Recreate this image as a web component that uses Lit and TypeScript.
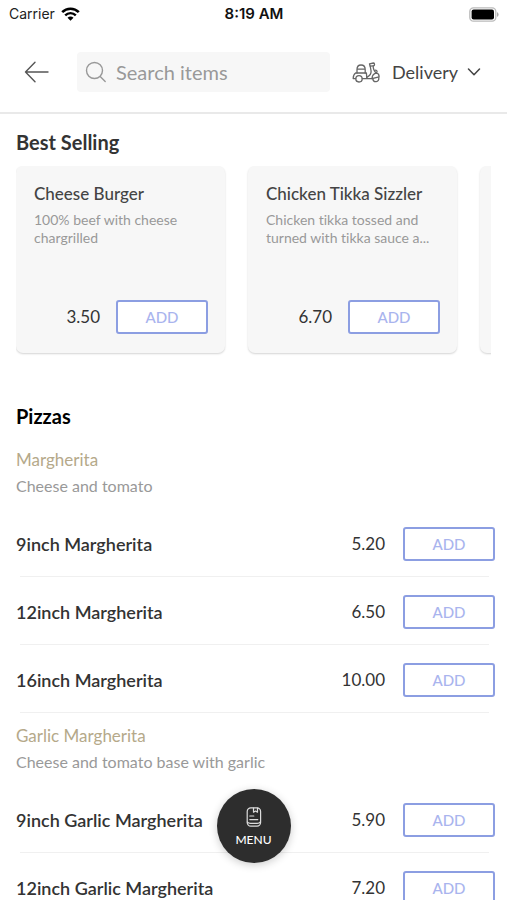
import { LitElement, html, css, svg } from "lit";
import { customElement, property } from "lit/decorators.js";

interface Item {
  name: string;
  price: string;
}

interface Group {
  title: string;
  description: string;
  items: Item[];
}

interface Featured extends Item {
  description: string;
}

const FEATURED: Featured[] = [
  { name: "Cheese Burger", description: "100% beef with cheese chargrilled", price: "3.50" },
  { name: "Chicken Tikka Sizzler", description: "Chicken tikka tossed and turned with tikka sauce a...", price: "6.70" },
  { name: "", description: "", price: "" },
];

const GROUPS: Group[] = [
  {
    title: "Margherita",
    description: "Cheese and tomato",
    items: [
      { name: "9inch Margherita", price: "5.20" },
      { name: "12inch Margherita", price: "6.50" },
      { name: "16inch Margherita", price: "10.00" },
    ],
  },
  {
    title: "Garlic Margherita",
    description: "Cheese and tomato base with garlic",
    items: [
      { name: "9inch Garlic Margherita", price: "5.90" },
      { name: "12inch Garlic Margherita", price: "7.20" },
    ],
  },
];

@customElement("add-button")
class AddButton extends LitElement {
  @property() item = "";

  static styles = css`
    :host {
      display: block;
      flex: none;
    }
    .add {
      display: block;
      width: 92px;
      height: 34px;
      padding: 0;
      border: 2px solid #8c9ee2;
      border-radius: 3px;
      background: #fff;
      color: #a9b4ee;
      font: 500 15px/30px Lato, sans-serif;
      cursor: pointer;
    }
  `;

  render() {
    return html`<button class="add" type="button" aria-label=${"ADD " + this.item}>ADD</button>`;
  }
}

@customElement("status-bar")
class StatusBar extends LitElement {
  static styles = css`
    :host {
      display: grid;
      grid-template-columns: 1fr auto 1fr;
      align-items: center;
      height: 28px;
      padding: 0 8px 0 9px;
      font: 400 14px/20px Inter, sans-serif;
      color: #222;
    }
    .carrier {
      display: flex;
      align-items: center;
      gap: 6px;
    }
    .time {
      font-weight: 600;
      font-size: 15px;
      color: #111;
    }
    .battery {
      justify-self: end;
    }
    svg {
      display: block;
    }
  `;

  render() {
    return html`
      <div class="carrier">
        <span>Carrier</span>
        <svg width="19" height="14" viewBox="0 0 19 14" fill="none" stroke="#000">
          <path d="M1.2 5.2C5.8.6 13.2.6 17.8 5.2" stroke-width="2.6" />
          <path d="M4.2 8.3c3-2.9 7.6-2.9 10.6 0" stroke-width="2.4" />
          <path d="M9.5 13.8 6.5 10.700c1.7-1.5 4.3-1.5 6 0Z" fill="#000" stroke="none" />
        </svg>
      </div>
      <span class="time">8:19 AM</span>
      <svg class="battery" width="30" height="15" viewBox="0 0 30 15">
        <rect x=".8" y=".8" width="26" height="13.4" rx="3.6" fill="#fff" stroke="#bbb" stroke-width="1.3" />
        <rect x="2.6" y="2.6" width="22.4" height="9.8" rx="2" fill="#000" />
        <path d="M28.2 5.2c1.7.6 1.7 4 0 4.6Z" fill="#999" />
      </svg>
    `;
  }
}

@customElement("app-root")
class AppRoot extends LitElement {
  static styles = css`
    :host {
      position: relative;
      display: flex;
      flex-direction: column;
      height: 100vh;
      overflow: hidden;
      background: #fff;
      color: #333;
      font-family: Lato, sans-serif;
      font-variant-ligatures: none;
    }
    * {
      box-sizing: border-box;
    }
    svg {
      display: block;
      flex: none;
    }
    h2,
    h3,
    p,
    ul {
      margin: 0;
      padding: 0;
      list-style: none;
    }
    .bar {
      display: flex;
      align-items: center;
      padding: 24px 26px 20px 24px;
      border-bottom: 2px solid #e9e9e9;
    }
    .back {
      padding: 0;
      border: 0;
      background: none;
      cursor: pointer;
    }
    .search {
      flex: 1;
      min-width: 0;
      display: flex;
      align-items: center;
      gap: 9px;
      height: 40px;
      margin: 0 22px 0 28px;
      padding: 0 8px;
      border-radius: 4px;
      background: #f7f7f7;
    }
    .field {
      flex: 1;
      min-width: 0;
      padding: 0;
      border: 0;
      outline: 0;
      background: none;
      color: #333;
      font: 400 20px/24px Lato, sans-serif;
    }
    .field::placeholder {
      color: #999;
      opacity: 1;
    }
    .mode {
      display: grid;
      grid-template-columns: auto auto;
      align-items: center;
      column-gap: 12px;
    }
    .pick {
      grid-area: 1 / 2;
      appearance: none;
      padding: 0 22px 0 0;
      border: 0;
      background: none;
      color: #444;
      font: 400 18px/24px Lato, sans-serif;
    }
    .chevron {
      grid-area: 1 / 2;
      justify-self: end;
      pointer-events: none;
    }
    .content {
      flex: 1;
      min-height: 0;
      overflow-y: auto;
      scrollbar-width: none;
      padding-top: 16px;
    }
    .heading {
      padding: 0 16px;
      font-size: 20px;
      line-height: 24px;
      font-weight: 700;
    }
    .cards {
      display: flex;
      gap: 23px;
      margin: 12px 16px 0;
      padding-bottom: 3px;
      overflow-x: auto;
      scrollbar-width: none;
    }
    .card {
      flex: none;
      display: flex;
      flex-direction: column;
      width: 209px;
      height: 187px;
      padding: 16px 17px 19px 18px;
      border-radius: 7px;
      background: #f7f7f7;
      box-shadow: 0 1px 2px #d4d4d4;
    }
    .name {
      font-size: 17px;
      line-height: 24px;
      font-weight: 500;
      color: #444;
      white-space: nowrap;
    }
    .about {
      margin-top: 5px;
      color: #999;
      font-size: 14px;
      line-height: 18px;
    }
    .buy {
      display: flex;
      justify-content: flex-end;
      align-items: center;
      gap: 16px;
      margin-top: auto;
    }
    .price {
      font-size: 17px;
      line-height: 24px;
    }
    .pizzas {
      margin-top: 48px;
      margin-bottom: 9px;
      color: #000;
    }
    .grouphead {
      padding: 12px 16px 13px;
    }
    .grouptitle {
      color: #b5a98a;
      font-size: 17px;
      line-height: 22px;
      font-weight: 400;
    }
    .groupabout {
      margin-top: 5px;
      color: #999;
      font-size: 16px;
      line-height: 20px;
    }
    .row {
      display: flex;
      align-items: center;
      gap: 18px;
      height: 67px;
      padding: 2px 12px 0 16px;
    }
    .rowname {
      flex: 1;
      font-size: 18px;
      line-height: 24px;
      font-weight: 600;
    }
    .line {
      height: 1px;
      margin: 0 18px 0 20px;
      background: #f0f0f0;
    }
    .menu {
      position: absolute;
      bottom: 37px;
      left: 50%;
      translate: -50% 0;
      display: flex;
      flex-direction: column;
      align-items: center;
      gap: 5px;
      width: 74px;
      height: 74px;
      padding: 18px 0 0;
      border: 0;
      border-radius: 50%;
      background: #2d2d2d;
      box-shadow: 0 2px 8px #0003;
      color: #fff;
      font: 500 12px/16px Lato, sans-serif;
      cursor: pointer;
    }
  `;

  private scooter() {
    return svg`
      <svg width="28" height="21" viewBox="0 0 28 21" fill="none" stroke="#666" stroke-width="1.3" stroke-linejoin="round" stroke-linecap="round">
        <path d="M5 11V7.500C5 4.800 6.500 3 9 3s4.200 1.800 4.200 4.500V11M5 7.200h8.200" />
        <path d="M3.600 11h10.800l.4 4.600M3.600 11C2 12 1.200 14 1.200 16.600h2.600M10.200 16.600h10" />
        <circle cx="7" cy="16.800" r="3.200" />
        <path d="M17.500 1.800 21.400 1c1.500.2 1.500 2.600 0 2.800l-3.300.4Z" />
        <path d="m18.200 4.200.9 4.800c.2 2.600-1.300 4.800-4.300 6.400M21.200 4c-.2 3 1.200 5.400 3.300 7.400" />
        <path d="M20 16.400c.2-2.900 1.800-4.800 4.500-5.200 1.700.2 2.600 1.500 2.600 3.600L20 16.600" />
        <path d="M20.800 16.800c.6 4.200 6.400 3.800 6-1.200M24 11c1.700-.8 1.400-2.600-.6-2.800" />
      </svg>`;
  }

  render() {
    return html`
      <status-bar></status-bar>
      <header class="bar">
        <button class="back" type="button" aria-label="Back">
          <svg width="25" height="22" viewBox="0 0 25 22" fill="none" stroke="#555" stroke-width="1.4" stroke-linecap="round" stroke-linejoin="round">
            <path d="M24 11H1.500M11 1.300 1.500 11 11 20.700" />
          </svg>
        </button>
        <label class="search">
          <svg width="22" height="22" viewBox="0 0 22 22" fill="none" stroke="#999" stroke-width="1.4" stroke-linecap="round">
            <circle cx="9.500" cy="9.500" r="8" />
            <path d="m15.200 15.400 5 5" />
          </svg>
          <input class="field" type="text" aria-label="Search items" placeholder="Search items" />
        </label>
        <label class="mode">
          ${this.scooter()}
          <select class="pick" aria-label="Order type">
            <option>Delivery</option>
          </select>
          <svg class="chevron" width="14" height="8" viewBox="0 0 14 8" fill="none" stroke="#444" stroke-width="1.5" stroke-linecap="round" stroke-linejoin="round">
            <path d="m1.500 1 5.500 5.800L12.500 1" />
          </svg>
        </label>
      </header>
      <main class="content">
        <h2 class="heading">Best Selling</h2>
        <div class="cards">
          ${FEATURED.map(
            (f) => html`
              <article class="card">
                ${f.name
                  ? html`
                      <h3 class="name">${f.name}</h3>
                      <p class="about">${f.description}</p>
                      <div class="buy">
                        <span class="price">${f.price}</span>
                        <add-button item=${f.name}></add-button>
                      </div>
                    `
                  : ""}
              </article>
            `
          )}
        </div>
        <h2 class="heading pizzas">Pizzas</h2>
        ${GROUPS.map(
          (g) => html`
            <section>
              <div class="grouphead">
                <h3 class="grouptitle">${g.title}</h3>
                <p class="groupabout">${g.description}</p>
              </div>
              <ul>
                ${g.items.map(
                  (i) => html`
                    <li>
                      <div class="row">
                        <span class="rowname">${i.name}</span>
                        <span class="price">${i.price}</span>
                        <add-button item=${i.name}></add-button>
                      </div>
                      <div class="line"></div>
                    </li>
                  `
                )}
              </ul>
            </section>
          `
        )}
      </main>
      <button class="menu" type="button">
        <svg width="16" height="20" viewBox="0 0 16 20" fill="none" stroke="#ddd" stroke-width="1.2" stroke-linecap="round" stroke-linejoin="round">
          <rect x="1.200" y=".8" width="13.400" height="18.400" rx="3.600" />
          <path d="M1.400 15c.8 1.100 1.700 1.400 3 1.400h6.800c1.600 0 2.700-.6 3.200-1.600M7.500 1v4.200l2-1.200 2 1.200V1M3.800 9h4M3.800 12.600h8" />
        </svg>
        <span>MENU</span>
      </button>
    `;
  }
}
